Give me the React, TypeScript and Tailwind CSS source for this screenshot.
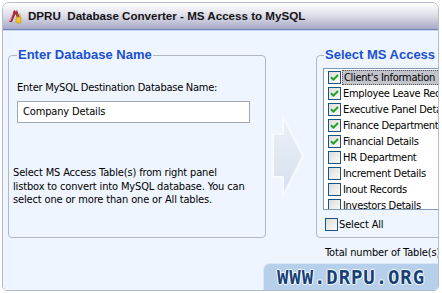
import React from "react";

const tables = [
  { name: "Client's Information", checked: true },
  { name: "Employee Leave Records", checked: true },
  { name: "Executive Panel Details", checked: true },
  { name: "Finance Department", checked: true },
  { name: "Financial Details", checked: true },
  { name: "HR Department", checked: false },
  { name: "Increment Details", checked: false },
  { name: "Inout Records", checked: false },
  { name: "Investors Details", checked: false },
];

function CheckBox({ checked }: { checked: boolean }) {
  return (
    <span className="w-[13px] h-[13px] shrink-0 border border-[#1c5180] bg-gradient-to-br from-[#dcdcd7] to-[#fbfbf9] flex items-center justify-center">
      {checked && (
        <svg width="9" height="9" viewBox="0 0 9 9">
          <path d="M1 4.2 L3.4 6.6 L8 2" fill="none" stroke="#21a121" strokeWidth="2" />
        </svg>
      )}
    </span>
  );
}

function AccessIcon() {
  return (
    <svg width="16" height="16" viewBox="0 0 16 16" className="shrink-0">
      <path d="M2 14 L7 2 L10 2 L14 13 L11 13 L8.5 6 L5 14 Z" fill="#a32a3a" />
      <path d="M7 2 L10 2 L9 4 Z" fill="#e8b0b8" />
      <path d="M3 13 L6 5" stroke="#f3c8cf" strokeWidth="0.8" />
      <rect x="9" y="9" width="5" height="6" rx="1" fill="#f2c230" stroke="#b88a10" strokeWidth="0.6" />
      <path d="M10 9 V7.5 A1.5 1.5 0 0 1 13 7.5 V9" fill="none" stroke="#b88a10" strokeWidth="0.9" />
    </svg>
  );
}

function Arrow() {
  return (
    <svg width="34" height="84" viewBox="0 0 34 84">
      <defs>
        <linearGradient id="ag" x1="0" y1="0" x2="0" y2="1">
          <stop offset="0" stopColor="#eaf0f8" />
          <stop offset="0.5" stopColor="#e0e8f2" />
          <stop offset="1" stopColor="#d6e1ee" />
        </linearGradient>
      </defs>
      <path
        d="M12 2 L32 41 L12 81 L12 62 L2 62 L2 19 L12 19 Z"
        fill="url(#ag)"
        stroke="#f6f9fd"
        strokeWidth="2"
        strokeLinejoin="round"
      />
    </svg>
  );
}

export default function App() {
  return (
    <div
      className="w-[442px] h-[293px] bg-white overflow-hidden pt-[2px] pl-[2px] text-[11px] text-black font-stretch-condensed tracking-[-0.15px]"
      style={{ fontFamily: "'DejaVu Sans', sans-serif" }}
    >
      <div className="w-[437px] border border-[#b4bccc] rounded-t-[7px] rounded-b-[5px] overflow-hidden flex flex-col">
        <div className="h-[26px] bg-gradient-to-b from-[#ffffff] via-[#dcdce8] to-[#a7a8c6] flex items-center pl-[4px] gap-[5px]">
          <AccessIcon />
          <span
            className="text-[11.6px] font-bold text-[#141414] whitespace-pre font-stretch-normal tracking-normal"
            style={{ fontFamily: "'Liberation Sans', Arial, sans-serif" }}
          >
            DPRU  Database Converter - MS Access to MySQL
          </span>
        </div>
        <div className="h-[1px] bg-[#6f86bd]" />
        <div className="h-[1px] bg-[#c8d5ee]" />
        <div className="h-[259px] bg-[#eef5fe] flex flex-col overflow-hidden">
          <div className="flex pt-[16px] pl-[5px]">
            <fieldset className="w-[258px] h-[191px] shrink-0 border border-[#b2b6c0] rounded-[4px] px-[8px]">
              <legend
                className="px-[1px] text-[13px] leading-[16px] font-bold text-[#1a50d2] font-stretch-normal tracking-normal"
                style={{ fontFamily: "'Liberation Sans', Arial, sans-serif" }}
              >
                Enter Database Name
              </legend>
              <div className="mt-[18px] leading-[13px] tracking-[-0.25px]">Enter MySQL Destination Database Name:</div>
              <div className="mt-[7px] w-[233px] h-[22px] bg-white border border-[#a3a7ae] flex items-center pl-[5px]">
                Company Details
              </div>
              <p className="mt-[43px] -ml-[4px] leading-[13.5px] whitespace-nowrap">
                Select MS Access Table(s) from right panel
                <br />
                listbox to convert into MySQL database. You can
                <br />
                select one or more than one or All tables.
              </p>
            </fieldset>
            <div className="w-[50px] shrink-0 flex pt-[68px] pl-[5px]">
              <Arrow />
            </div>
            <fieldset className="w-[150px] h-[191px] shrink-0 border border-[#b2b6c0] rounded-[4px] px-[6px]">
              <legend
                className="ml-[1px] px-[1px] text-[13px] leading-[16px] font-bold text-[#1a50d2] whitespace-nowrap font-stretch-normal tracking-normal"
                style={{ fontFamily: "'Liberation Sans', Arial, sans-serif" }}
              >
                Select MS Access Table(s)
              </legend>
              <div className="mt-[5px] w-[132px] h-[142px] bg-white border border-[#7f9db9] overflow-hidden tracking-[-0.3px]">
                {tables.map((t, i) => (
                  <div key={t.name} className="h-[16px] flex items-center pl-[4px] whitespace-nowrap">
                    <CheckBox checked={t.checked} />
                    <span
                      className={
                        i === 0
                          ? "ml-[1px] pl-[1px] pr-[4px] h-[15px] leading-[13px] bg-[#c3c3cb] border border-dotted border-[#555]"
                          : "ml-[2px] leading-[15px]"
                      }
                    >
                      {t.name}
                    </span>
                  </div>
                ))}
              </div>
              <div className="mt-[8px] ml-[2px] flex items-center gap-[1px]">
                <CheckBox checked={false} />
                <span className="leading-[13px]">Select All</span>
              </div>
            </fieldset>
          </div>
          <div className="mt-[8px] pl-[322px] leading-[14px] whitespace-nowrap">Total number of Table(s) : 9</div>
          <div className="mt-[3px] flex justify-end">
            <div
              className="w-[175px] h-[27px] bg-[#b6cfea] rounded-tl-[7px] border-t border-l border-[#d8e6f5] flex items-center justify-center text-[19px] font-bold text-[#173f78] tracking-[0.9px] font-stretch-normal"
              style={{
                fontFamily: "'DejaVu Sans Mono', 'Liberation Mono', monospace",
                textShadow: "1px 0 #fff, -1px 0 #fff, 0 1px #fff, 0 -1px #fff",
              }}
            >
              WWW.DRPU.ORG
            </div>
          </div>
        </div>
      </div>
    </div>
  );
}
